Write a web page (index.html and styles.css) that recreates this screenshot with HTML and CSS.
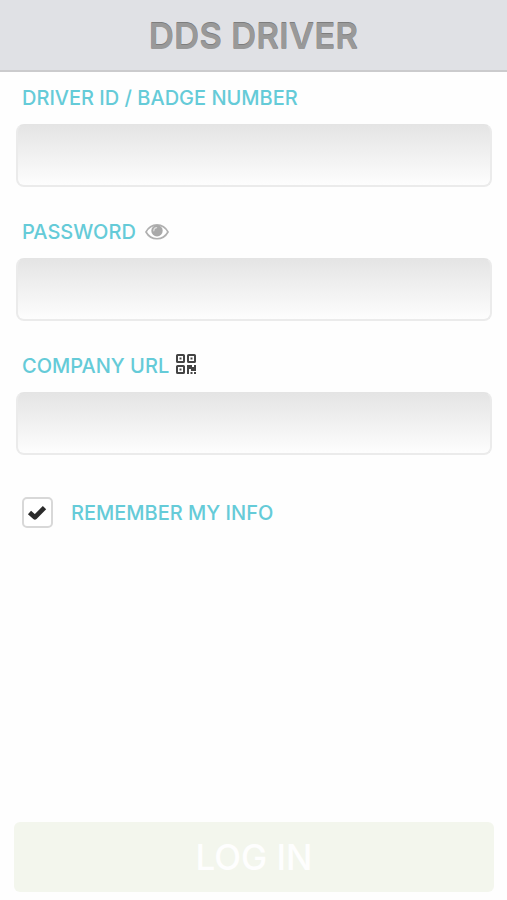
FILE: index.html
```html
<!DOCTYPE html>
<html lang="en">
<head>
<meta charset="utf-8">
<meta name="viewport" content="width=device-width, initial-scale=1">
<title>DDS Driver</title>
<link rel="stylesheet" href="styles.css">
</head>
<body>
<header class="header"><h1 class="title">DDS DRIVER</h1></header>
<form class="form">
  <div class="field">
    <div class="label-row"><label for="driver">DRIVER ID / BADGE NUMBER</label></div>
    <input class="input" id="driver" type="text">
  </div>
  <div class="field">
    <div class="label-row">
      <label for="password">PASSWORD</label>
      <button class="icon-button eye" type="button" aria-label="Show password">
        <svg width="24" height="18" viewBox="0 0 24 18"><path d="M1 9C6 -.5 18 -.5 23 9C18 18 6 18 1 9Z" fill="#fff" stroke="#b0b0b0" stroke-width="1.700"/><circle cx="12" cy="7.700" r="5.700" fill="#a9a9a9"/><path d="M8.800 7.800Q8.800 4.800 11.600 4.600" fill="none" stroke="#ddd" stroke-width="1.200" stroke-linecap="round"/></svg>
      </button>
    </div>
    <input class="input" id="password" type="password">
  </div>
  <div class="field">
    <div class="label-row">
      <label for="url">COMPANY URL</label>
      <button class="icon-button qr" type="button" aria-label="Scan QR code">
        <svg width="20" height="20" viewBox="0 0 20 20"><g fill="none" stroke="#444" stroke-width="2"><rect x="1" y="1" width="7" height="7" rx=".6"/><rect x="12" y="1" width="7" height="7" rx=".6"/><rect x="1" y="12" width="7" height="7" rx=".6"/></g><path fill="#444" d="M3.500 3.500h2v2h-2zM14.500 3.500h2v2h-2zM3.500 14.500h2v2h-2zM11 11h5v2h2v-2h2v6h-5v-2h-2v5h-2zM14.500 18h2v2h-2zM18 18h2v2h-2z"/></svg>
      </button>
    </div>
    <input class="input" id="url" type="text">
  </div>
  <div class="remember">
    <input class="checkbox" id="remember" type="checkbox" checked>
    <svg class="check" viewBox="0 0 18 14" aria-hidden="true"><path d="M2 7L7 11.500L16 2.500" fill="none" stroke="#2b2b2b" stroke-width="4.400" stroke-linejoin="round"/></svg>
    <label for="remember">REMEMBER MY INFO</label>
  </div>
  <button class="login" type="submit">LOG IN</button>
</form>
</body>
</html>
```
FILE: styles.css
```css
* {
  box-sizing: border-box;
}

body {
  display: flex;
  flex-direction: column;
  min-height: 100vh;
  margin: 0;
  background: #fefefe;
  color: #65cbd8;
  font: 500 20px/24px Inter, "Liberation Sans", sans-serif;
}

.header {
  padding: 15px 16px 13px;
  border-bottom: 2px solid #cbcbcd;
  background: #e0e1e5;
  text-align: center;
}

.title {
  margin: 0;
  color: #999;
  font-size: 35px;
  font-weight: 600;
  line-height: 42px;
  text-shadow: 0 -1px 0 #7d7d7d;
}

.form {
  display: flex;
  flex: 1;
  flex-direction: column;
  padding: 0 13px 8px 14px;
}

.field {
  margin: 0 2px 19px;
}

.label-row {
  display: flex;
  align-items: center;
  height: 52px;
  padding-left: 6px;
}

.input {
  display: block;
  width: 100%;
  height: 63px;
  padding: 0 12px;
  border: 2px solid #ebebeb;
  border-top: 1px solid #e4e4e4;
  border-radius: 8px;
  background: linear-gradient(#e4e4e4, #fefefe) border-box;
  color: #444;
  font: inherit;
}

.icon-button {
  display: flex;
  padding: 0;
  border: 0;
  background: none;
}

.eye {
  margin-left: 9px;
}

.qr {
  margin: 0 0 4px 7px;
}

.remember {
  display: flex;
  position: relative;
  align-items: center;
  gap: 18px;
  margin-top: 23px;
  padding-left: 8px;
}

.checkbox {
  width: 31px;
  height: 31px;
  margin: 0;
  appearance: none;
  border: 2px solid #d8d8d8;
  border-radius: 5px;
  background: #fff;
}

.check {
  display: none;
  position: absolute;
  top: 8px;
  left: 13px;
  width: 20px;
  height: 15px;
  pointer-events: none;
}

.checkbox:checked + .check {
  display: block;
}

.login {
  height: 70px;
  margin-top: auto;
  border: 0;
  border-radius: 6px;
  background: #f3f6ed;
  color: #fefefe;
  font: inherit;
  font-size: 35px;
}
```
